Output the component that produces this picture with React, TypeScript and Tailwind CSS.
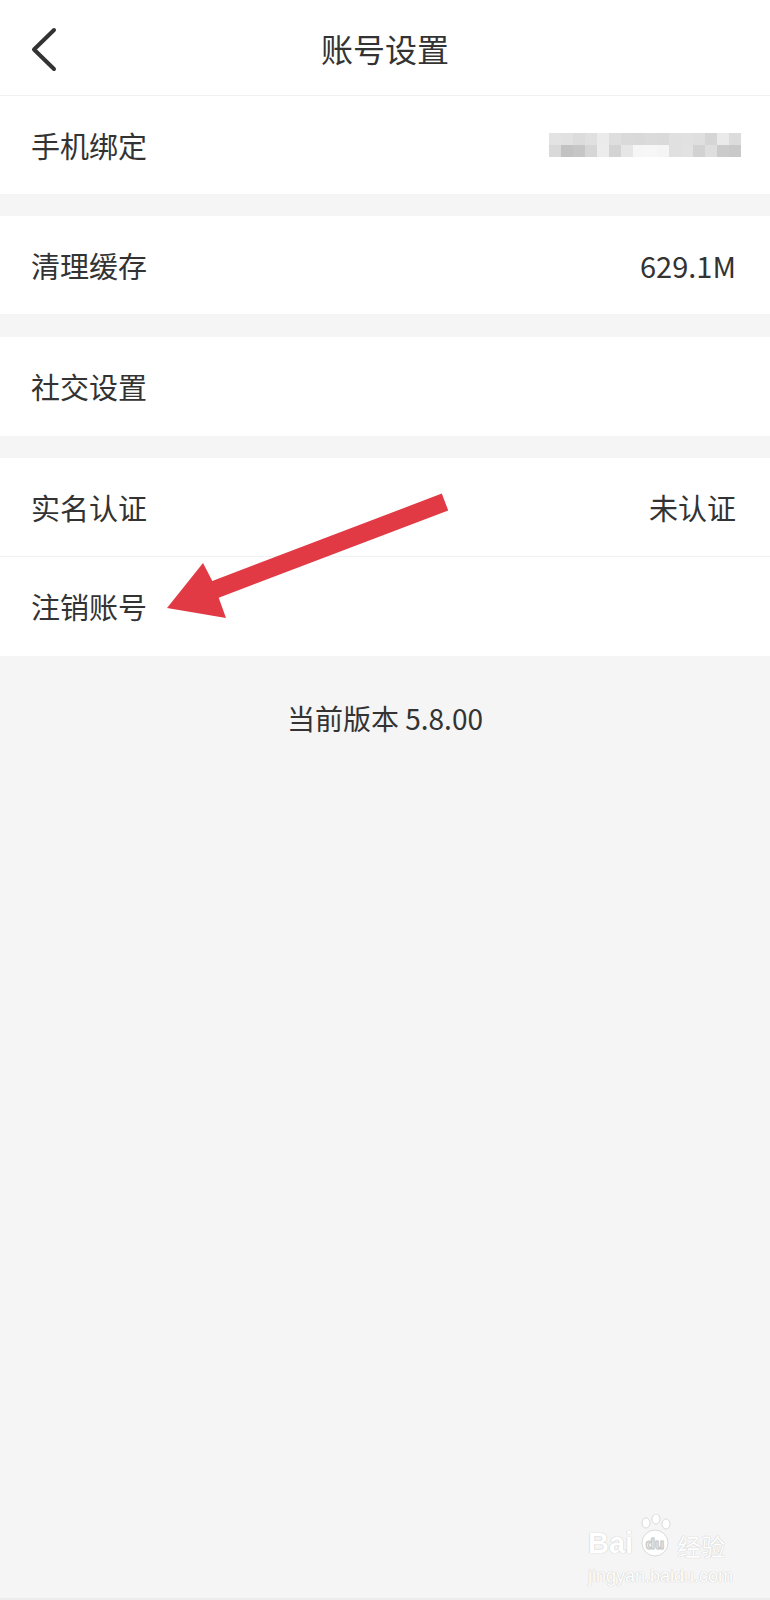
import React from "react";

const blurTop = [
  "bg-[#e3e3e3]", "bg-[#e1e1e1]", "bg-[#dcdcdc]", "bg-[#e0e0e0]", "bg-[#ebebeb]", "bg-[#dedede]",
  "bg-[#dadada]", "bg-[#d9d9d9]", "bg-[#dbdbdb]", "bg-[#dadada]", "bg-[#e0e0e0]", "bg-[#e1e1e1]",
  "bg-[#dfdfdf]", "bg-[#d5d5d5]", "bg-[#eaeaea]", "bg-[#dcdcdc]",
];
const blurBottom = [
  "bg-[#d9d9d9]", "bg-[#c2c2c2]", "bg-[#c6c6c6]", "bg-[#d6d6d6]", "bg-[#ececec]", "bg-[#d3d3d3]",
  "bg-[#e6e6e6]", "bg-[#f6f6f6]", "bg-[#f7f7f7]", "bg-[#f5f5f5]", "bg-[#e0e0e0]", "bg-[#e2e2e2]",
  "bg-[#d2d2d2]", "bg-[#dedede]", "bg-[#cbcbcb]", "bg-[#c9c9c9]",
];

function Row({
  label,
  right,
  className = "",
}: {
  label: string;
  right?: React.ReactNode;
  className?: string;
}) {
  return (
    <div className={`flex items-center justify-between bg-white pl-[31px] pr-[34px] ${className}`}>
      <span className="text-[29px] text-[#333333] leading-none">{label}</span>
      {right}
    </div>
  );
}

export default function App() {
  return (
    <div
      className="relative w-[770px] h-[1600px] overflow-hidden bg-[#f5f5f5]"
      style={{ fontFamily: '"Noto Sans CJK SC", "Noto Sans", sans-serif' }}
    >
      {/* Header */}
      <div className="relative flex h-[96px] items-center justify-center border-b border-[#f0f0f0] bg-white">
        <svg
          className="absolute left-[26px] top-[26px]"
          width="34"
          height="46"
          viewBox="0 0 34 46"
          fill="none"
        >
          <path
            d="M28 4 L8 23.5 L28 43"
            stroke="#333333"
            strokeWidth="4"
            strokeLinecap="round"
            strokeLinejoin="round"
          />
        </svg>
        <span className="text-[32px] text-[#333333] leading-none">账号设置</span>
      </div>

      <Row
        label="手机绑定"
        className="h-[98px]"
        right={
          <div className="mr-[-5px] flex flex-col blur-[0.6px]">
            <div className="flex">
              {blurTop.map((c, i) => (
                <div key={i} className={`h-[12px] w-[12px] ${c}`} />
              ))}
            </div>
            <div className="flex">
              {blurBottom.map((c, i) => (
                <div key={i} className={`h-[12px] w-[12px] ${c}`} />
              ))}
            </div>
          </div>
        }
      />
      <div className="h-[22px]" />
      <Row
        label="清理缓存"
        className="h-[98px]"
        right={<span className="text-[29px] text-[#333333] leading-none">629.1M</span>}
      />
      <div className="h-[23px]" />
      <Row label="社交设置" className="h-[99px]" />
      <div className="h-[22px]" />
      <Row
        label="实名认证"
        className="h-[99px] border-b border-[#f1f1f1]"
        right={<span className="text-[29px] text-[#333333] leading-none">未认证</span>}
      />
      <Row label="注销账号" className="h-[99px]" />

      <div className="mt-[44px] flex justify-center">
        <span className="text-[28px] text-[#333333] leading-[36px]">当前版本 5.8.00</span>
      </div>

      {/* Red annotation arrow */}
      <svg className="pointer-events-none absolute left-0 top-0" width="770" height="700">
        <polygon
          points="167,608 203,563 212.3,580.9 441.8,493.6 448.2,510.4 218.7,597.7 226,618"
          fill="#e13a45"
        />
      </svg>

      {/* Watermark */}
      <div className="pointer-events-none absolute left-[588px] top-[1514px] flex flex-col items-start">
        <div
          className="flex items-end text-white font-bold leading-none [text-shadow:0_0_1px_#c8c8c8,0_0_1px_#c8c8c8]"
          style={{ fontFamily: '"Liberation Sans", "Noto Sans CJK SC", sans-serif' }}
        >
          <span className="text-[29px]">Bai</span>
          <svg width="42" height="44" viewBox="0 0 42 44" className="mx-[1px]">
            <g fill="#ffffff" stroke="#d0d0d0" strokeWidth="0.8">
              <ellipse cx="12" cy="9" rx="4" ry="5" />
              <ellipse cx="22" cy="5" rx="4" ry="5" />
              <ellipse cx="32" cy="10" rx="4" ry="5" />
              <circle cx="21" cy="29" r="13" />
            </g>
            <text
              x="21"
              y="35"
              textAnchor="middle"
              fontSize="15"
              fill="#ffffff"
              stroke="#c8c8c8"
              strokeWidth="0.6"
              fontFamily="Liberation Sans, sans-serif"
            >
              du
            </text>
          </svg>
          <span className="text-[24px] font-normal" style={{ fontFamily: '"Noto Sans CJK SC", sans-serif' }}>
            经验
          </span>
        </div>
        <span
          className="mt-[9px] text-[18px] text-white leading-none [text-shadow:0_0_1px_#c8c8c8,0_0_1px_#c8c8c8]"
          style={{ fontFamily: '"Liberation Sans", sans-serif' }}
        >
          jingyan.baidu.com
        </span>
      </div>
      <div className="absolute bottom-0 left-0 h-[2px] w-full bg-[#ececec]" />
    </div>
  );
}
